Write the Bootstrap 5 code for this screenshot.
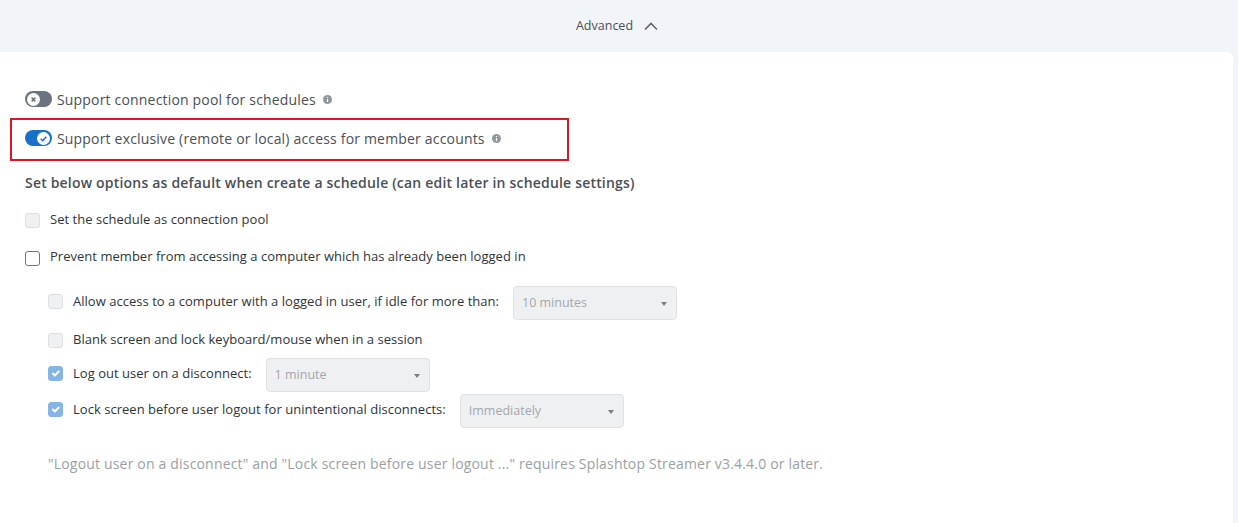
<!DOCTYPE html>
<html lang="en">
<head>
<meta charset="utf-8">
<title>Advanced</title>
<link href="https://cdn.jsdelivr.net/npm/bootstrap@5.3.0/dist/css/bootstrap.min.css" rel="stylesheet">
<style>
html,body{height:523px;overflow:hidden}
body{background:#f1f4f9;font-family:"Open Sans",sans-serif;color:#3a3f47;font-size:13px}
.adv-head{height:52px;font-size:12.5px;color:#4a5058;padding-right:3px}
.adv-chev{margin-left:10px}
.adv-panel{width:1233px;height:471px;background:#fff;border-top-right-radius:6px;padding:37px 0 0 25px}
.tog{width:27px;height:16px;border-radius:8px;background:#6b7280;position:relative;flex:none}
.tog.on{background:#1a6fc9}
.tog svg{position:absolute;top:1.5px;left:2px}
.tog.on svg{left:12px}
.tog-row{font-size:14px;letter-spacing:.18px;color:#4a4f57;height:20px;gap:5px}
.info-dot{width:9px;height:9px;margin-left:2px;flex:none}
.red-box{margin:9px 0 0 -15px;width:559px;height:43px;border:2px solid #e3141f;padding:0 0 3px 13px}
.set-title{font-size:14px;letter-spacing:.19px;font-weight:600;color:#4a4f57;margin:12px 0 0;line-height:20px}
.cb-row{font-size:13px;letter-spacing:.028px;font-weight:500;color:#2f343b;line-height:18px}
.cb-row>span{margin-bottom:2px}
.cb-row>span.txt-up{margin-bottom:4px}
.cb-row .form-check-input{width:15px;height:15px;margin:0;flex:none;border-radius:3px;border:1px solid #70757c;opacity:1;background-color:#fff}
.cb-row .form-check-input:disabled{background-color:#eff0f2;border-color:#dcdfe3;opacity:1}
.cb-row .form-check-input:checked:disabled{background-color:#85b5e4;border-color:#85b5e4}
.cb-top{gap:10px}
.cb-sub{gap:10px;margin-left:23px}
.gap-a{margin-top:17px}.gap-b{margin-top:17px}.gap-c{margin-top:14px}.gap-d{margin-top:10px}.gap-e{margin-top:5px}.gap-f{margin-top:-1px}
.sel-box{width:164px;height:34px;margin-top:3px;font-size:12.5px;letter-spacing:0;font-weight:400;color:#a3a7ad;background-color:#eff0f2;border:1px solid #dfe1e5;border-radius:4px;padding:0 8px;flex:none;position:relative;line-height:31px}
.sel-box::after{content:"";position:absolute;right:9px;top:15px;border:3.5px solid transparent;border-top:4px solid #7b7f85;border-bottom:0}
.foot-note{font-size:14px;letter-spacing:.18px;color:#9b9fa5;margin:26px 0 0 23px;line-height:20px}
</style>
</head>
<body>
<div class="adv-head d-flex align-items-center justify-content-center">
  <span>Advanced</span>
  <svg class="adv-chev" width="16" height="10" viewBox="0 0 16 10"><path d="M2 8.5 8 2.5 14 8.5" fill="none" stroke="#5f646b" stroke-width="1.6"/></svg>
</div>
<div class="adv-panel">
  <div class="tog-row d-flex align-items-center">
    <span class="tog"><svg width="13" height="13" viewBox="0 0 14 14"><circle cx="7" cy="7" r="7" fill="#fff"/><path d="M5 5l4 4M9 5l-4 4" stroke="#6b7280" stroke-width="1.6"/></svg></span>
    <span>Support connection pool for schedules</span>
    <svg class="info-dot" viewBox="0 0 9 9"><circle cx="4.5" cy="4.5" r="4.5" fill="#92979e"/><path d="M4.5 2v1M4.5 4v3" stroke="#fff" stroke-width="1.2"/></svg>
  </div>
  <div class="red-box d-flex align-items-center">
    <div class="tog-row d-flex align-items-center">
      <span class="tog on"><svg width="13" height="13" viewBox="0 0 14 14"><circle cx="7" cy="7" r="7" fill="#fff"/><path d="M4 7.2 6.2 9.4 10 5" fill="none" stroke="#1a6fc9" stroke-width="1.6"/></svg></span>
      <span>Support exclusive (remote or local) access for member accounts</span>
      <svg class="info-dot" viewBox="0 0 9 9"><circle cx="4.5" cy="4.5" r="4.5" fill="#92979e"/><path d="M4.5 2v1M4.5 4v3" stroke="#fff" stroke-width="1.2"/></svg>
    </div>
  </div>
  <p class="set-title">Set below options as default when create a schedule (can edit later in schedule settings)</p>
  <div class="cb-row cb-top gap-a d-flex align-items-center">
    <input class="form-check-input" type="checkbox" disabled aria-label="Set the schedule as connection pool"><span>Set the schedule as connection pool</span>
  </div>
  <div class="cb-row cb-top gap-b d-flex align-items-center">
    <input class="form-check-input" type="checkbox" aria-label="Prevent member"><span class="txt-up">Prevent member from accessing a computer which has already been logged in</span>
  </div>
  <div class="cb-row cb-sub gap-c d-flex align-items-center">
    <input class="form-check-input" type="checkbox" disabled aria-label="Allow access"><span>Allow access to a computer with a logged in user, if idle for more than:</span>
    <div class="sel-box ms-1">10 minutes</div>
  </div>
  <div class="cb-row cb-sub gap-d d-flex align-items-center">
    <input class="form-check-input" type="checkbox" disabled aria-label="Blank screen"><span>Blank screen and lock keyboard/mouse when in a session</span>
  </div>
  <div class="cb-row cb-sub gap-e d-flex align-items-center">
    <input class="form-check-input" type="checkbox" disabled checked aria-label="Log out"><span>Log out user on a disconnect:</span>
    <div class="sel-box ms-1">1 minute</div>
  </div>
  <div class="cb-row cb-sub gap-f d-flex align-items-center">
    <input class="form-check-input" type="checkbox" disabled checked aria-label="Lock screen"><span>Lock screen before user logout for unintentional disconnects:</span>
    <div class="sel-box ms-1">Immediately</div>
  </div>
  <p class="foot-note">"Logout user on a disconnect" and "Lock screen before user logout ..." requires Splashtop Streamer v3.4.4.0 or later.</p>
</div>
</body>
</html>
